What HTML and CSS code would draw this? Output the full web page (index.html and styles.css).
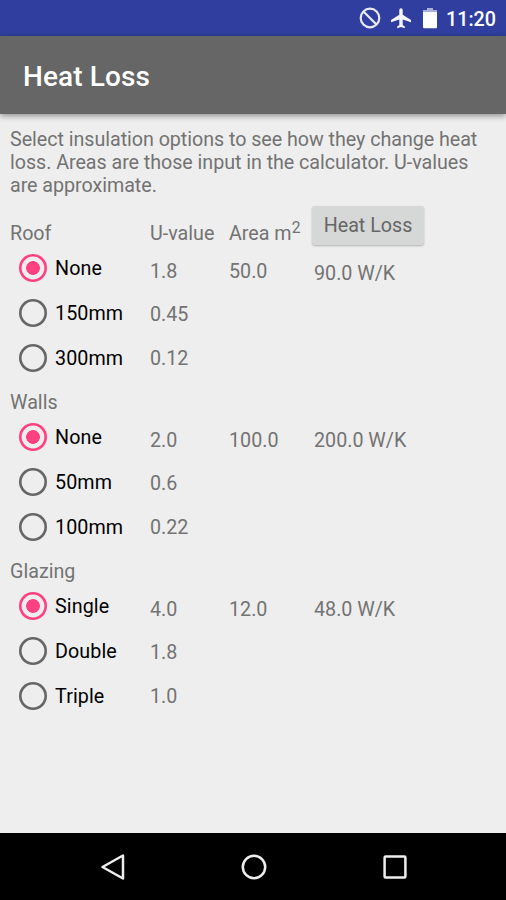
FILE: index.html
```
<!DOCTYPE html>
<html lang="en">
<head>
    <meta charset="UTF-8">
    <meta name="viewport" content="width=device-width, initial-scale=1.0">
    <title>Heat Loss</title>
    <link rel="stylesheet" href="styles.css">
</head>
<body>
    <div class="status-bar">
        <svg class="icon-blocked" width="22" height="22" viewBox="0 0 22 22" fill="none" stroke="#e8eaf8" stroke-width="2.2">
            <circle cx="11" cy="11" r="9.3"/>
            <path d="M4.5 4.5l13 13"/>
        </svg>
        <svg class="icon-plane" width="20" height="21" viewBox="0 0 20 21" fill="#f4f5fc">
            <path d="M20 14.2v-2.1l-8.3-5.3V1.9a1.7 1.7 0 0 0-3.4 0v4.9L0 12.1v2.1l8.3-2.6v5.3L6.2 18.5V20.2l3.8-1.1 3.8 1.1v-1.7l-2.1-1.6v-5.3z"/>
        </svg>
        <svg class="icon-battery" width="14" height="21" viewBox="0 0 14 21">
            <path fill="#aab0dc" d="M4 0h6v2h4v3H0V2h4z"/>
            <path fill="#fff" d="M0 4h14v15a1.2 1.2 0 0 1-1.2 1.2H1.2A1.2 1.2 0 0 1 0 19z"/>
        </svg>
        <span class="clock">11:20</span>
    </div>

    <header class="toolbar">
        <h1>Heat Loss</h1>
    </header>

    <main class="content">
        <p class="intro">Select insulation options to see how they change heat loss. Areas are those input in the calculator. U-values are approximate.</p>

        <section class="group">
            <div class="options">
                <h2>Roof</h2>
                <label class="option"><span class="radio checked"></span>None</label>
                <label class="option"><span class="radio"></span>150mm</label>
                <label class="option"><span class="radio"></span>300mm</label>
            </div>
            <div class="values">
                <h2>U-value</h2>
                <span>1.8</span>
                <span>0.45</span>
                <span>0.12</span>
            </div>
            <div class="area">
                <h2>Area m<sup>2</sup></h2>
                <span>50.0</span>
            </div>
            <div class="loss loss-first">
                <button class="btn">Heat Loss</button>
                <span>90.0 W/K</span>
            </div>
        </section>

        <section class="group">
            <div class="options">
                <h2>Walls</h2>
                <label class="option"><span class="radio checked"></span>None</label>
                <label class="option"><span class="radio"></span>50mm</label>
                <label class="option"><span class="radio"></span>100mm</label>
            </div>
            <div class="values">
                <h2></h2>
                <span>2.0</span>
                <span>0.6</span>
                <span>0.22</span>
            </div>
            <div class="area">
                <h2></h2>
                <span>100.0</span>
            </div>
            <div class="loss">
                <h2></h2>
                <span>200.0 W/K</span>
            </div>
        </section>

        <section class="group">
            <div class="options">
                <h2>Glazing</h2>
                <label class="option"><span class="radio checked"></span>Single</label>
                <label class="option"><span class="radio"></span>Double</label>
                <label class="option"><span class="radio"></span>Triple</label>
            </div>
            <div class="values">
                <h2></h2>
                <span>4.0</span>
                <span>1.8</span>
                <span>1.0</span>
            </div>
            <div class="area">
                <h2></h2>
                <span>12.0</span>
            </div>
            <div class="loss">
                <h2></h2>
                <span>48.0 W/K</span>
            </div>
        </section>
    </main>

    <nav class="nav-bar">
        <svg width="28" height="28" viewBox="0 0 28 28"><path d="M3.5 14L24 2.5v23z"/></svg>
        <svg width="28" height="28" viewBox="0 0 28 28"><circle cx="14" cy="14" r="11.2"/></svg>
        <svg width="28" height="28" viewBox="0 0 28 28"><rect x="3.6" y="3.6" width="20.8" height="20.8" rx="1"/></svg>
    </nav>
</body>
</html>
```
FILE: styles.css
```
:root {
    --blue: #303f9f;
    --toolbar: #666666;
    --bg: #eeeeee;
    --text: #737373;
    --pink: #ff4081;
}

* {
    box-sizing: border-box;
    margin: 0;
    padding: 0;
}

body {
    background: var(--bg);
    font-family: Roboto, sans-serif;
    font-size: 19.7px;
    line-height: 23px;
    color: var(--text);
    height: 900px;
    display: flex;
    flex-direction: column;
    overflow: hidden;
}

.status-bar {
    background: var(--blue);
    height: 36px;
    flex: none;
    display: flex;
    align-items: center;
    justify-content: flex-end;
    padding-right: 10px;
}

.icon-blocked {
    margin-right: 10px;
}

.icon-plane {
    margin-right: 12px;
}

.icon-battery {
    margin-right: 9px;
}

.clock {
    color: #fff;
    font-size: 19.7px;
    font-weight: 500;
    padding-top: 2px;
}

.toolbar {
    background: var(--toolbar);
    height: 78px;
    flex: none;
    display: flex;
    align-items: center;
    padding: 2px 0 0 23px;
    box-shadow: 0 2px 6px rgba(0, 0, 0, 0.4);
}

.toolbar h1 {
    color: #fff;
    font-size: 28px;
    font-weight: 500;
    line-height: 33px;
    letter-spacing: 0.1px;
}

.content {
    flex: 1;
    padding: 14px 10px 0;
}

.intro {
    line-height: 23.2px;
    letter-spacing: -0.04px;
    margin-bottom: 24px;
}

.group {
    display: flex;
    height: 169px;
}

.group h2 {
    font-size: 19.7px;
    font-weight: 400;
    height: 24px;
}

.group sup {
    font-size: 15.7px;
    line-height: 0;
    vertical-align: 7px;
}

.options {
    width: 140px;
}

.option {
    display: flex;
    align-items: center;
    height: 45px;
    padding-left: 9px;
    color: #000;
    letter-spacing: 0.1px;
}

.radio {
    width: 28px;
    height: 28px;
    margin-right: 8px;
    border-radius: 50%;
    box-shadow: inset 0 0 0 2.6px #666;
}

.radio.checked {
    box-shadow: inset 0 0 0 2.6px var(--pink);
    background: radial-gradient(circle, var(--pink) 6.5px, transparent 7.2px);
}

.values {
    width: 79px;
}

.area {
    width: 85px;
}

.values span,
.area span,
.loss span {
    display: block;
    height: 43.5px;
    padding-top: 14px;
}

.loss-first span {
    padding-top: 17px;
}

.btn {
    display: block;
    width: 112px;
    height: 39px;
    margin: -16px 0 0 -2px;
    border: none;
    border-radius: 3px;
    background: #d6d7d7;
    box-shadow: 0 1px 2px rgba(0, 0, 0, 0.25);
    color: #666;
    font-family: inherit;
    font-size: 19.7px;
}

.nav-bar {
    background: #000;
    height: 67px;
    flex: none;
    display: flex;
    align-items: center;
    justify-content: center;
    gap: 113px;
    padding-left: 1px;
}

.nav-bar svg {
    fill: none;
    stroke: #eee;
    stroke-width: 2.5;
    stroke-linejoin: round;
}
```
